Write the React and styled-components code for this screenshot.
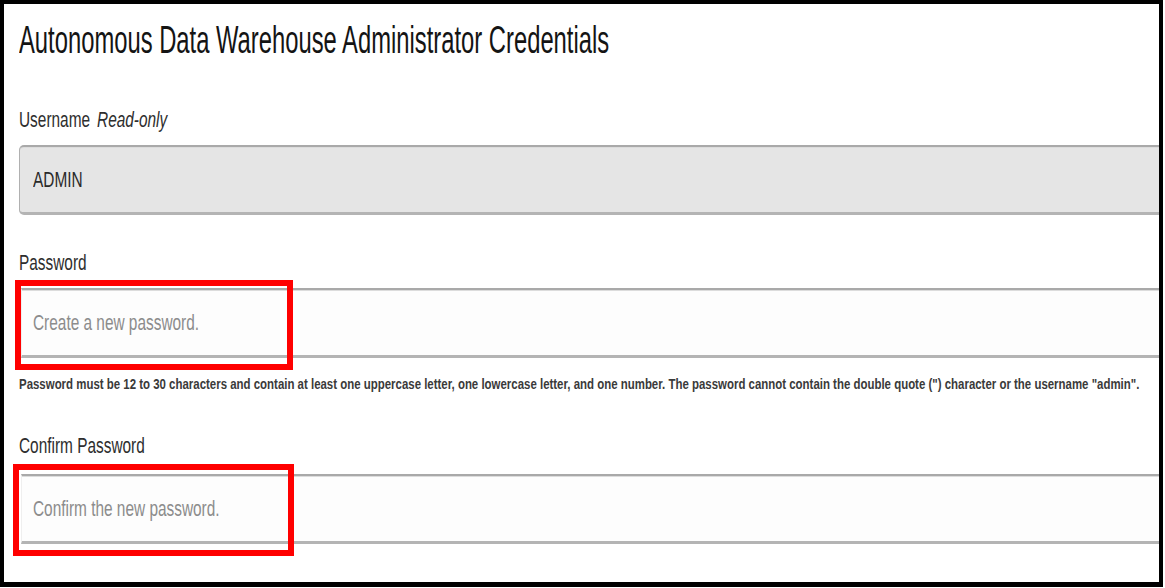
import React from "react";
import styled, { createGlobalStyle } from "styled-components";

const Global = createGlobalStyle`
  html, body { margin: 0; padding: 0; background: #ffffff; }
  body { font-family: "Liberation Sans", Arial, sans-serif; }
`;

const Frame = styled.div`
  box-sizing: border-box;
  width: 1163px;
  height: 587px;
  border: 4px solid #000000;
  border-bottom-width: 5px;
  background: #ffffff;
  overflow: hidden;
  padding: 15px 0 0 15px;
  display: flex;
  flex-direction: column;
`;

const Narrow = styled.span`
  display: inline-block;
  white-space: nowrap;
  transform: scaleX(${(p) => p.$sx});
  transform-origin: 0 50%;
`;

const Title = styled.h1`
  margin: 0;
  font-size: 38px;
  line-height: 42px;
  font-weight: 400;
  color: #141414;
`;

const Label = styled.div`
  margin-top: ${(p) => p.$mt}px;
  font-size: 22px;
  line-height: 26px;
  color: #2e2e2e;
`;

const Hint = styled.em`
  font-style: italic;
  margin-left: 10px;
`;

const FieldWrap = styled.div`
  position: relative;
  margin-top: ${(p) => p.$mt}px;
  width: 1160px;
`;

const Field = styled.div`
  box-sizing: border-box;
  height: 70px;
  display: flex;
  align-items: center;
  padding-left: ${(p) => (p.$readonly ? 13 : 11)}px;
  margin-left: ${(p) => (p.$readonly ? 0 : 2)}px;
  font-size: 22px;
  background: ${(p) => (p.$readonly ? "#e5e5e5" : "#fdfdfd")};
  color: ${(p) => (p.$readonly ? "#2a2a2a" : "#8c8c8c")};
  border-top: 2px solid #a9a9a9;
  border-bottom: 3px solid #b4b4b4;
  border-left: 1px solid ${(p) => (p.$readonly ? "#b0b0b0" : "#efefef")};
  border-radius: ${(p) => (p.$readonly ? "5px" : "0")};
  box-shadow: inset 0 1px 0 #dcdcdc;
`;

const Highlight = styled.div`
  position: absolute;
  box-sizing: border-box;
  left: ${(p) => p.$l}px;
  top: ${(p) => p.$t}px;
  width: ${(p) => p.$w}px;
  height: ${(p) => p.$h}px;
  border: 6px solid #ff0000;
  pointer-events: none;
`;

const Help = styled.div`
  margin-top: 17px;
  font-size: 15px;
  line-height: 18px;
  font-weight: 700;
  color: #3a3a3a;
`;

export default function App() {
  return (
    <>
      <Global />
      <Frame>
        <Title>
          <Narrow $sx={0.626}>Autonomous Data Warehouse Administrator Credentials</Narrow>
        </Title>

        <Label $mt={46}>
          <Narrow $sx={0.7}>
            Username<Hint>Read-only</Hint>
          </Narrow>
        </Label>
        <FieldWrap $mt={12}>
          <Field $readonly>
            <Narrow $sx={0.7}>ADMIN</Narrow>
          </Field>
        </FieldWrap>

        <Label $mt={35}>
          <Narrow $sx={0.7}>Password</Narrow>
        </Label>
        <FieldWrap $mt={12}>
          <Field>
            <Narrow $sx={0.7}>Create a new password.</Narrow>
          </Field>
          <Highlight $l={-4} $t={-8} $w={278} $h={90} />
        </FieldWrap>

        <Help>
          <Narrow $sx={0.763}>
            Password must be 12 to 30 characters and contain at least one uppercase letter, one lowercase letter, and one number. The password cannot contain the double quote (") character or the username "admin".
          </Narrow>
        </Help>

        <Label $mt={40}>
          <Narrow $sx={0.7}>Confirm Password</Narrow>
        </Label>
        <FieldWrap $mt={15}>
          <Field>
            <Narrow $sx={0.7}>Confirm the new password.</Narrow>
          </Field>
          <Highlight $l={-6} $t={-10} $w={281} $h={92} />
        </FieldWrap>
      </Frame>
    </>
  );
}
